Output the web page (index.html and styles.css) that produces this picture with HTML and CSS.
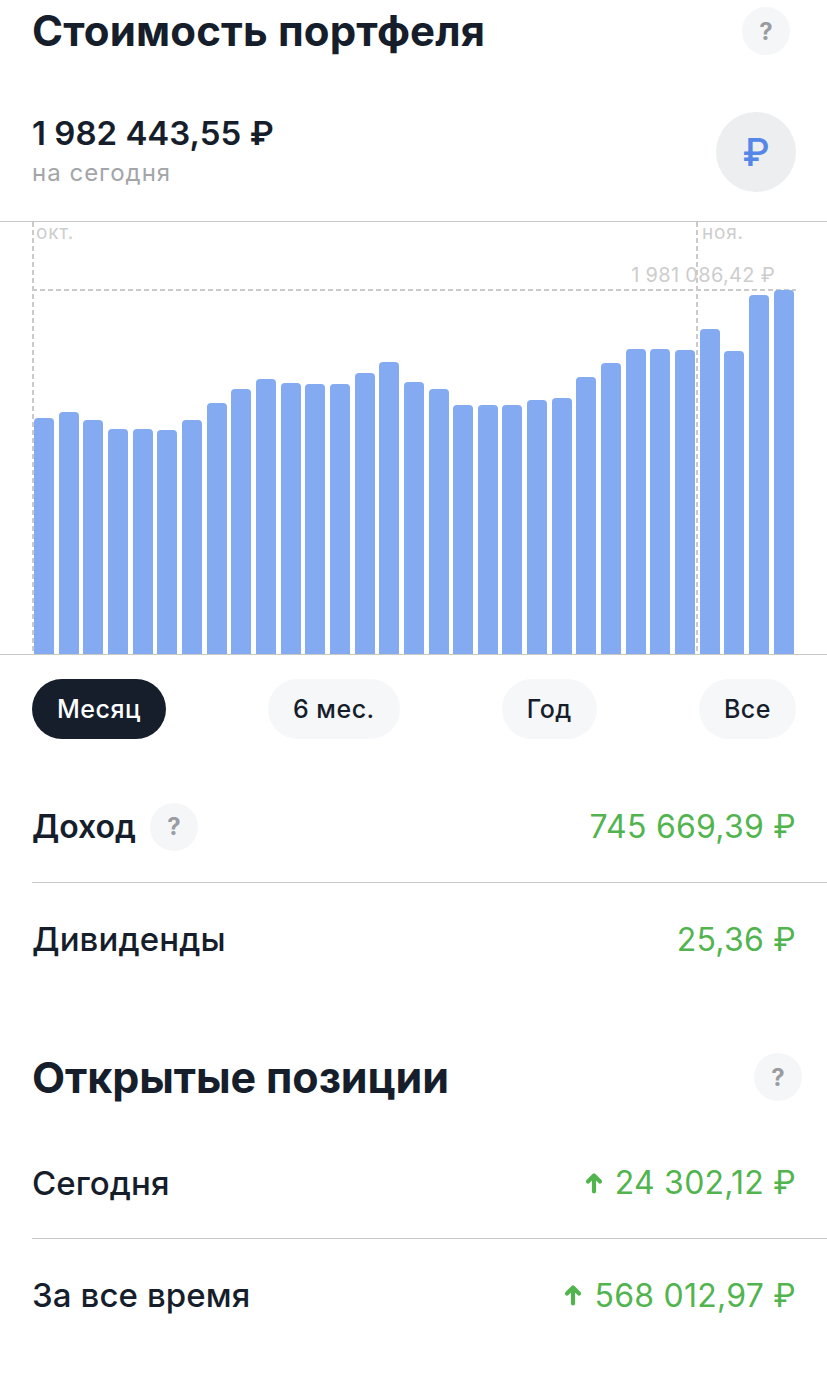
FILE: index.html
```html
<!DOCTYPE html>
<html lang="ru">
<head>
<meta charset="utf-8">
<title>Стоимость портфеля</title>
<link rel="stylesheet" href="styles.css">
</head>
<body>
<main class="page">
  <header class="head">
    <h1 class="title title-main">Стоимость портфеля</h1>
    <span class="help help-top">?</span>
  </header>
  <section class="value">
    <div>
      <div class="amount">1 982 443,55 ₽</div>
      <div class="caption">на сегодня</div>
    </div>
    <div class="currency">₽</div>
  </section>
  <section class="chart">
    <div class="vline vline-a"></div>
    <div class="vline vline-b"></div>
    <div class="hline"></div>
    <span class="month month-a">окт.</span>
    <span class="month month-b">ноя.</span>
    <span class="peak">1 981 086,42 ₽</span>
    <div class="bars">
      <i style="height:236px"></i><i style="height:242px"></i><i style="height:234px"></i><i style="height:225px"></i><i style="height:225px"></i><i style="height:224px"></i><i style="height:234px"></i><i style="height:251px"></i><i style="height:265px"></i><i style="height:275px"></i><i style="height:271px"></i><i style="height:270px"></i><i style="height:270px"></i><i style="height:281px"></i><i style="height:292px"></i><i style="height:272px"></i><i style="height:265px"></i><i style="height:249px"></i><i style="height:249px"></i><i style="height:249px"></i><i style="height:254px"></i><i style="height:256px"></i><i style="height:277px"></i><i style="height:291px"></i><i style="height:305px"></i><i style="height:305px"></i><i style="height:304px"></i><i style="height:325px"></i><i style="height:303px"></i><i style="height:359px"></i><i style="height:364px"></i>
    </div>
  </section>
  <nav class="periods">
    <span class="pill pill-active">Месяц</span>
    <span class="pill">6 мес.</span>
    <span class="pill">Год</span>
    <span class="pill">Все</span>
  </nav>
  <section class="rows">
    <div class="row row-line">
      <div class="label-wrap"><span class="label label-bold">Доход</span><span class="help">?</span></div>
      <span class="money">745 669,39 ₽</span>
    </div>
    <div class="row">
      <span class="label">Дивиденды</span>
      <span class="money">25,36 ₽</span>
    </div>
  </section>
  <header class="head head-second">
    <h2 class="title title-sub">Открытые позиции</h2>
    <span class="help">?</span>
  </header>
  <section class="rows rows-second">
    <div class="row row-line">
      <span class="label">Сегодня</span>
      <span class="money"><svg class="arrow" viewBox="0 0 18 22" aria-hidden="true"><path d="M9 19.500V3.500M3 9.500 9 3.500l6 6" fill="none" stroke="currentColor" stroke-width="4.200" stroke-linecap="round" stroke-linejoin="round"/></svg>24 302,12 ₽</span>
    </div>
    <div class="row">
      <span class="label">За все время</span>
      <span class="money"><svg class="arrow" viewBox="0 0 18 22" aria-hidden="true"><path d="M9 19.500V3.500M3 9.500 9 3.500l6 6" fill="none" stroke="currentColor" stroke-width="4.200" stroke-linecap="round" stroke-linejoin="round"/></svg>568 012,97 ₽</span>
    </div>
  </section>
</main>
</body>
</html>
```

FILE: styles.css
```css
* { box-sizing: border-box; }
html, body { margin: 0; padding: 0; background: #fff; }
body {
  width: 827px;
  height: 1391px;
  overflow: hidden;
  font-family: Inter, "Liberation Sans", sans-serif;
  color: #161e2c;
}
.page { display: flex; flex-direction: column; }

.head {
  display: flex;
  align-items: center;
  justify-content: space-between;
  padding: 7px 37px 0 32px;
  height: 55px;
}
.title {
  margin: 0;
  line-height: 48px;
  font-weight: 700;
}
.title-main { font-size: 42px; letter-spacing: 0.15px; }
.title-sub { font-size: 43px; letter-spacing: -0.1px; }
.help {
  display: flex;
  align-items: center;
  justify-content: center;
  width: 48px;
  height: 48px;
  border-radius: 50%;
  background: #f5f6f8;
  color: #9a9ca1;
  font-size: 24px;
  font-weight: 700;
}

.value {
  display: flex;
  align-items: center;
  justify-content: space-between;
  padding: 57px 31px 29px 32px;
}
.amount { margin-top: -2px; font-size: 33px; line-height: 40px; font-weight: 600; }
.caption { margin-top: 4px; font-size: 24px; line-height: 32px; color: #a3a5a9; letter-spacing: 1px; }
.currency {
  display: flex;
  align-items: center;
  justify-content: center;
  width: 80px;
  height: 80px;
  border-radius: 50%;
  background: #eceef0;
  color: #5587e8;
  font-size: 38px;
  font-weight: 500;
}

.chart {
  position: relative;
  height: 434px;
  border-top: 1px solid #c9c9c9;
  border-bottom: 1px solid #c9c9c9;
}
.bars {
  position: absolute;
  left: 34px;
  bottom: 0;
  display: flex;
  align-items: flex-end;
  gap: 4.67px;
}
.bars i {
  display: block;
  width: 20px;
  background: #84aaf1;
  border-radius: 4px 4px 0 0;
}
.vline {
  position: absolute;
  top: 0;
  bottom: 0;
  width: 2px;
  background: repeating-linear-gradient(to bottom, #cbcbcb 0 5px, transparent 5px 8px);
}
.vline-a { left: 32px; }
.vline-b { left: 696px; }
.hline {
  position: absolute;
  left: 32px;
  width: 764px;
  top: 67px;
  height: 2px;
  background: repeating-linear-gradient(to right, #cbcbcb 0 5px, transparent 5px 8px);
}
.month, .peak {
  position: absolute;
  color: #cdcdcd;
  font-size: 19px;
  line-height: 22px;
  letter-spacing: 0.8px;
}
.month-a { left: 36px; top: 0; }
.month-b { left: 702px; top: 0; }
.peak { right: 52px; top: 41px; font-size: 20px; line-height: 24px; letter-spacing: 0.3px; z-index: 1; }

.periods {
  display: flex;
  justify-content: space-between;
  padding: 24px 31px 0 32px;
}
.pill {
  display: flex;
  align-items: center;
  height: 60px;
  padding: 0 25px;
  border-radius: 30px;
  background: #f6f7f9;
  font-size: 25px;
  font-weight: 500;
  letter-spacing: 0.5px;
}
.pill-active { background: #161e2c; color: #fff; }

.rows { margin-top: 32px; padding-left: 32px; }
.row {
  display: flex;
  align-items: center;
  justify-content: space-between;
  height: 112px;
  padding-right: 31px;
}
.row-line { border-bottom: 1px solid #c9c9c9; }
.label-wrap { display: flex; align-items: center; gap: 14px; }
.label { font-size: 33px; font-weight: 500; letter-spacing: 0.1px; }
.label-bold { font-size: 32px; font-weight: 600; letter-spacing: 0; }
.money {
  display: flex;
  align-items: center;
  color: #52b44f;
  font-size: 32px;
  font-weight: 400;
  letter-spacing: 0.25px;
}
.arrow { width: 18px; height: 22px; margin-right: 12px; }

.head-second { height: 48px; margin-top: 58px; padding: 0 25px 0 32px; }
.rows-second { margin-top: 26px; }
```
